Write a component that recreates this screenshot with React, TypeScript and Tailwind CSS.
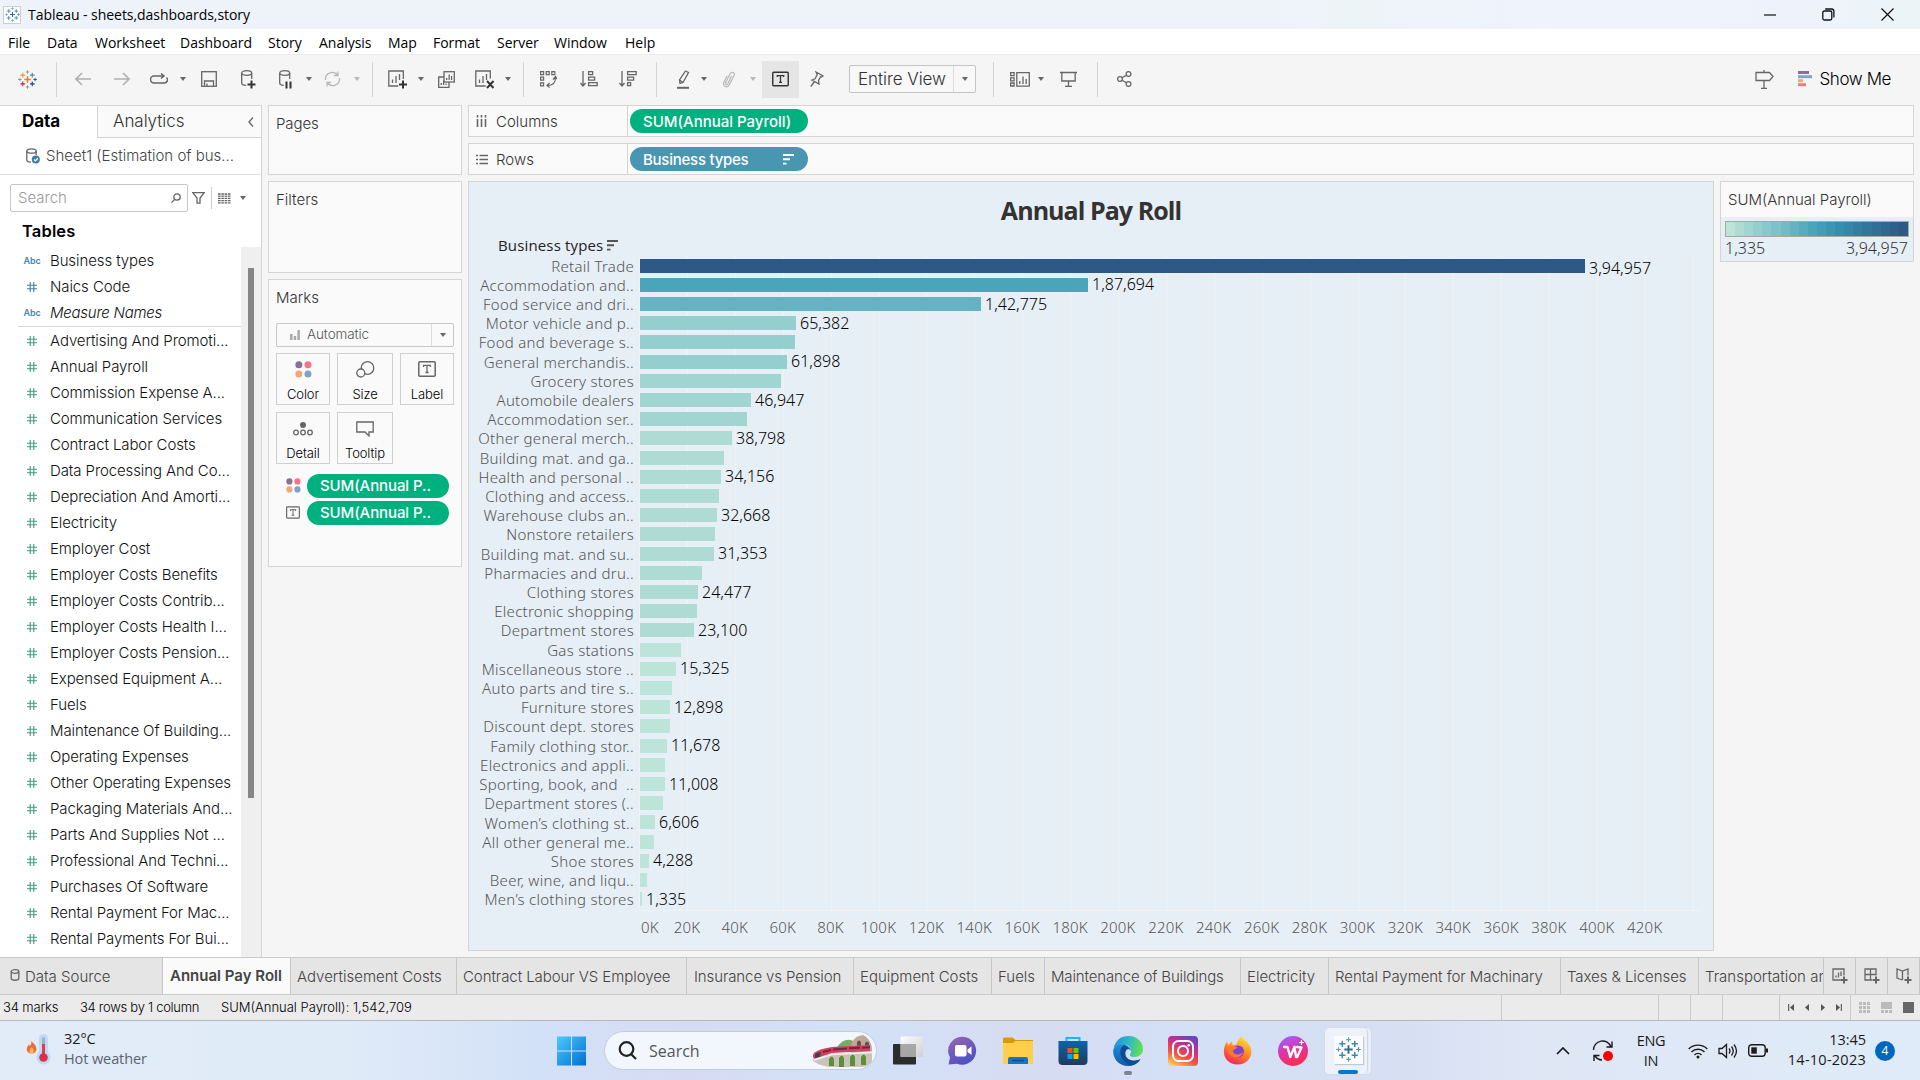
import React from 'react';

type Row = { name: string; w: number; value?: string; color: string };

const C = ['#bce4d8', '#aedcd5', '#a1d5d2', '#95cecf', '#66b2c2', '#4ba5ba', '#2c5985'];
const rows: Row[] = [
  { name: 'Retail Trade', w: 945, value: '3,94,957', color: C[6] },
  { name: 'Accommodation and..', w: 448, value: '1,87,694', color: C[5] },
  { name: 'Food service and dri..', w: 341, value: '1,42,775', color: C[4] },
  { name: 'Motor vehicle and p..', w: 156, value: '65,382', color: C[3] },
  { name: 'Food and beverage s..', w: 155, color: C[3] },
  { name: 'General merchandis..', w: 147, value: '61,898', color: C[3] },
  { name: 'Grocery stores', w: 141, color: C[2] },
  { name: 'Automobile dealers', w: 111, value: '46,947', color: C[2] },
  { name: 'Accommodation ser..', w: 107, color: C[2] },
  { name: 'Other general merch..', w: 92, value: '38,798', color: C[1] },
  { name: 'Building mat. and ga..', w: 84, color: C[1] },
  { name: 'Health and personal ..', w: 81, value: '34,156', color: C[1] },
  { name: 'Clothing and access..', w: 79, color: C[1] },
  { name: 'Warehouse clubs an..', w: 77, value: '32,668', color: C[1] },
  { name: 'Nonstore retailers', w: 75, color: C[1] },
  { name: 'Building mat. and su..', w: 74, value: '31,353', color: C[1] },
  { name: 'Pharmacies and dru..', w: 62, color: C[1] },
  { name: 'Clothing stores', w: 58, value: '24,477', color: C[1] },
  { name: 'Electronic shopping', w: 57, color: C[1] },
  { name: 'Department stores', w: 54, value: '23,100', color: C[1] },
  { name: 'Gas stations', w: 41, color: C[0] },
  { name: 'Miscellaneous store ..', w: 36, value: '15,325', color: C[0] },
  { name: 'Auto parts and tire s..', w: 32, color: C[0] },
  { name: 'Furniture stores', w: 30, value: '12,898', color: C[0] },
  { name: 'Discount dept. stores', w: 30, color: C[0] },
  { name: 'Family clothing stor..', w: 27, value: '11,678', color: C[0] },
  { name: 'Electronics and appli..', w: 25, color: C[0] },
  { name: 'Sporting, book, and  ..', w: 25, value: '11,008', color: C[0] },
  { name: 'Department stores (..', w: 23, color: C[0] },
  { name: 'Women’s clothing st..', w: 15, value: '6,606', color: C[0] },
  { name: 'All other general me..', w: 14, color: C[0] },
  { name: 'Shoe stores', w: 9, value: '4,288', color: C[0] },
  { name: 'Beer, wine, and liqu..', w: 7, color: C[0] },
  { name: 'Men’s clothing stores', w: 2, value: '1,335', color: C[0] },
];

const legend = ['#bce4d8', '#aedcd5', '#a1d5d2', '#95cecf', '#89c8cc', '#7ec1ca', '#72bac6', '#66b2c2', '#59acbe', '#4ba5ba', '#419eb6', '#3b96b2', '#358ead', '#3586a7', '#347ea1', '#32779b', '#316f96', '#2f6790', '#2d608a', '#2c5985'];

const measures = [
  'Advertising And Promoti...', 'Annual Payroll', 'Commission Expense A...', 'Communication Services', 'Contract Labor Costs',
  'Data Processing And Co...', 'Depreciation And Amorti...', 'Electricity', 'Employer Cost', 'Employer Costs Benefits',
  'Employer Costs Contrib...', 'Employer Costs Health I...', 'Employer Costs Pension...', 'Expensed Equipment A...', 'Fuels',
  'Maintenance Of Building...', 'Operating Expenses', 'Other Operating Expenses', 'Packaging Materials And...', 'Parts And Supplies Not ...',
  'Professional And Techni...', 'Purchases Of Software', 'Rental Payment For Mac...', 'Rental Payments For Bui...',
];

const Svg = ({ w, h, children, className = '' }: { w: number; h: number; children: React.ReactNode; className?: string }) => (
  <svg width={w} height={h} viewBox={`0 0 ${w} ${h}`} fill="none" stroke="#666" strokeWidth="1.3" className={`shrink-0 ${className}`}>{children}</svg>
);
const Sep = ({ className = '' }: { className?: string }) => <div className={`h-[35px] w-px shrink-0 bg-[#d4d4d4] ${className}`} />;
const Caret = ({ className = '', c = '#666' }: { className?: string; c?: string }) => (
  <Svg w={6} h={4} className={className}><path d="M0 0h6L3 4z" fill={c} stroke="none" /></Svg>
);
const Hash = ({ c }: { c: string }) => (
  <Svg w={10} h={10}><path d="M3.2 0v10M6.8 0v10M0 3.2h10M0 6.8h10" stroke={c} strokeWidth="1.1" /></Svg>
);

const plus = (x: number, y: number, r: number, c: string, sw = 1.2) => (
  <path key={`${x}-${y}`} d={`M${x - r} ${y}h${2 * r}M${x} ${y - r}v${2 * r}`} stroke={c} strokeWidth={sw} />
);
const TableauMark = ({ size, colors, className = '' }: { size: number; colors: string[]; className?: string }) => (
  <svg width={size} height={size} viewBox="0 0 24 24" fill="none" className={`shrink-0 ${className}`}>
    {plus(12, 12, 4, colors[0], 1.8)}
    {plus(6, 6.5, 3, colors[1], 1.4)}
    {plus(18, 6.5, 3, colors[2], 1.4)}
    {plus(6, 17.5, 3, colors[3], 1.4)}
    {plus(18, 17.5, 3, colors[4], 1.4)}
    {plus(12, 2.5, 2.2, colors[5], 1.1)}
    {plus(12, 21.5, 2.2, colors[5], 1.1)}
    {plus(2.4, 12, 2.2, colors[5], 1.1)}
    {plus(21.6, 12, 2.2, colors[4], 1.1)}
  </svg>
);
const blues = ['#2f6c93', '#3d87b0', '#3d87b0', '#3d87b0', '#3d87b0', '#5b9cbd'];

const Dots = ({ size }: { size: number }) => (
  <svg width={size} height={size} viewBox="0 0 16 16" className="shrink-0">
    <circle cx="3.6" cy="3.6" r="3.3" fill="#876f98" /><circle cx="12.2" cy="3.6" r="3.3" fill="#fa7383" />
    <circle cx="3.6" cy="12.2" r="3.3" fill="#f5a677" /><circle cx="12.2" cy="12.2" r="3.3" fill="#7ea4ca" />
  </svg>
);
const TBox = ({ w, h, c = '#666' }: { w: number; h: number; c?: string }) => (
  <svg width={w} height={h} viewBox="0 0 18 16" fill="none" stroke={c} className="shrink-0">
    <rect x=".8" y=".8" width="16.4" height="14.4" rx="1" strokeWidth="1.5" />
    <path d="M5.6 6V4.4h6.8V6M9 4.4v7M7.4 11.5h3.2" strokeWidth="1.3" />
  </svg>
);

function TitleBar() {
  return (
    <div className="flex h-[29px] items-center bg-[linear-gradient(90deg,#eef3fa_0%,#eef3fa_66%,#edf4f7_70%,#eef3fc_80%,#eef3fb_94%,#ebf4f6_100%)] pl-[3px] font-['Open_Sans'] text-black">
      <div className="flex h-[18px] w-[18px] items-center justify-center border border-[#c9ced3] bg-white"><TableauMark size={15} colors={blues} /></div>
      <span className="ml-[7px] whitespace-nowrap text-[14px] tracking-[-0.05px]">Tableau - sheets,dashboards,story</span>
      <div className="ml-auto mr-[26px] flex items-center gap-[46px]">
        <Svg w={12} h={12}><path d="M0 6h12" stroke="#111" strokeWidth="1.2" /></Svg>
        <Svg w={13} h={13}><rect x=".8" y="3" width="9" height="9" rx="1.5" stroke="#111" /><path d="M3.2 1h6.3a2.4 2.4 0 0 1 2.4 2.4v6" stroke="#111" /></Svg>
        <Svg w={13} h={13}><path d="M.5 .5l12 12M12.500 .5l-12 12" stroke="#111" strokeWidth="1.2" /></Svg>
      </div>
    </div>
  );
}

const menu: [string, string][] = [
  ['File', 'w-[39px]'], ['Data', 'w-[48px]'], ['Worksheet', 'w-[85px]'], ['Dashboard', 'w-[88px]'], ['Story', 'w-[51px]'], ['Analysis', 'w-[69px]'],
  ['Map', 'w-[45px]'], ['Format', 'w-[64px]'], ['Server', 'w-[57px]'], ['Window', 'w-[71px]'], ['Help', 'w-[40px]'],
];

function MenuBar() {
  return (
    <div className="flex h-[25px] items-center bg-white pl-[8px] pt-[2px] font-['Open_Sans'] text-[14px] tracking-[-0.02px] text-black">
      {menu.map(([m, w]) => <div key={m} className={`${w} whitespace-nowrap`}>{m}</div>)}
    </div>
  );
}

function Toolbar() {
  return (
    <div className="flex h-[51px] items-center border-t border-[#ececec] bg-[#f5f5f5] pb-[2px] pl-[18px]">
      <TableauMark size={19} colors={['#e8762d', '#eb912b', '#5b879b', '#c72037', '#1f457e', '#7199a6']} />
      <Sep className="ml-[19px]" />
      <Svg w={16} h={14} className="ml-[18px]"><path d="M16 7H1M7 1L1 7l6 6" stroke="#b0b0b0" strokeWidth="1.6" /></Svg>
      <Svg w={16} h={14} className="ml-[23px]"><path d="M0 7h15M9 1l6 6-6 6" stroke="#b0b0b0" strokeWidth="1.6" /></Svg>
      <Svg w={18} h={12} className="ml-[20px]"><path d="M14 3H4a3.500 3.500 0 0 0 0 7h10a3.200 3.200 0 0 0 2.500-5.500M11 .5L14 3l-3 2.500" strokeWidth="1.5" /></Svg>
      <Caret className="ml-[12px]" />
      <Svg w={16} h={16} className="ml-[15px]"><rect x=".7" y=".7" width="14.600" height="14.600" /><path d="M3.500 15v-5h9v5M6 12.500V15" /></Svg>
      <Svg w={15} h={19} className="ml-[24px]"><ellipse cx="5.700" cy="3" rx="5" ry="2.300" /><path d="M.7 3v10c0 1.500 2 2.300 4.500 2.400M10.700 3v6" /><path d="M10.500 10.500v8M6.500 14.500h8" stroke="#333" strokeWidth="2" /></Svg>
      <Svg w={14} h={19} className="ml-[22px]"><ellipse cx="6.700" cy="3" rx="5" ry="2.300" /><path d="M1.700 3v10c0 1.500 2 2.200 4 2.400M11.700 3v6" /><path d="M8.500 11.500v7M12.500 11.500v7" stroke="#333" strokeWidth="2" /></Svg>
      <Caret className="ml-[14px]" />
      <Svg w={17} h={16} className="ml-[12px]"><path d="M1.500 9A6.800 6.800 0 0 1 13.800 4.300M15.500 7A6.800 6.800 0 0 1 3.200 11.700M14 .5v4h-4M3 15.500v-4h4" stroke="#b8b8b8" /></Svg>
      <Caret className="ml-[13px]" c="#b8b8b8" />
      <Sep className="ml-[12px]" />
      <Svg w={20} h={19} className="ml-[15px]"><path d="M15.300 9V1H.8v15h9.500M4.500 13V9.500M8 13V6M11.500 10V4" /><path d="M15 10.500v8M11 14.500h8" stroke="#333" strokeWidth="2" /></Svg>
      <Caret className="ml-[10px]" />
      <Svg w={17} h={17} className="ml-[14px]"><rect x="6" y=".7" width="10.300" height="10.300" /><path d="M6 6H.7v10.300H11V11M8.700 9V7M11.200 9V3.500M13.600 9V5M3.200 14v-2M5.600 14V9.500M8 14v-1.500" /></Svg>
      <Svg w={20} h={19} className="ml-[20px]"><path d="M15.300 8.500V1H.8v15h10M4.500 13V9.500M8 13V6M11.500 10V4" /><path d="M12 11l6.500 7M18.500 11L12 18" stroke="#333" strokeWidth="1.900" /></Svg>
      <Caret className="ml-[10px]" />
      <Sep className="ml-[12px]" />
      <Svg w={17} h={17} className="ml-[16px]"><path d="M.6.600h3v3h-3zM6.200.600h3v3h-3zM11.800.600h3v3h-3zM.6 6.200h3v3h-3zM.6 11.800h3v3h-3zM15.500 6.500c0 5-2.500 8-8 8M13 8.500l2.500-3 2 3M9.500 12l-2.500 2.500 2.500 2" strokeWidth="1.200" /></Svg>
      <Svg w={18} h={16} className="ml-[23px]"><path d="M3 0v15M.5 12L3 15l2.500-3M8.600.700h4v3h-4zM8.600 6.200h6v3h-6zM8.600 11.700h8.600v3H8.600z" /></Svg>
      <Svg w={18} h={16} className="ml-[21px]"><path d="M3 0v15M.5 12L3 15l2.500-3M8.600.700h8.600v3H8.600zM8.600 6.200h6v3h-6zM8.600 11.700h3v3h-3z" /></Svg>
      <Sep className="ml-[19px]" />
      <Svg w={14} h={19} className="ml-[19px]"><path d="M9.500 1l3 1.500-5.500 10-3 1L3.500 10zM3.500 10L7 12.500" /><path d="M1 17.800h12" strokeWidth="2" /></Svg>
      <Caret className="ml-[11px]" />
      <Svg w={14} h={17} className="ml-[15px]"><path d="M9.500 5L6 12.500c-1 2-3 1-2.200-1L8 3c1.500-3 5.500-1.500 4 1.500L7.500 13.500C5.500 17.500 0 15.500 2 11l3-6" stroke="#bbb" /></Svg>
      <Caret className="ml-[14px]" c="#b8b8b8" />
      <div className="ml-[6px] flex h-[37px] w-[37px] shrink-0 items-center justify-center bg-[#e5e5e5]"><TBox w={17} h={16} c="#333" /></div>
      <Svg w={14} h={16} className="ml-[11px]"><path d="M6 1l7 4-1.500 1-1-.3-2 4L9 13 2 9l3-1.200 2.200-4zM4.500 10.500L.8 15.500" /></Svg>
      <div className="ml-[25px] flex h-[28px] w-[127px] shrink-0 items-center rounded-[2px] border border-[#c4c4c4] bg-[#f8f8f8]">
        <span className="flex-1 whitespace-nowrap pl-[8px] pt-[2px] font-['Inter'] text-[17px] font-light tracking-[-0.05px] text-[#333]">Entire View</span>
        <div className="flex h-full w-[22px] items-center justify-center border-l border-[#ddd]"><Caret /></div>
      </div>
      <Sep className="ml-[17px]" />
      <Svg w={20} h={15} className="ml-[16px]"><path d="M.6.600h3.500v3H.6zM.6 5.800h3.500v3H.6zM.6 11h3.500v3H.6zM6.800.700h12.500v13.500H6.800zM9.800 12V9M13 12V4.500M16.200 12V7" /></Svg>
      <Caret className="ml-[8px]" />
      <Svg w={17} h={16} className="ml-[16px]"><path d="M0 1.500h17M1.800 1.500v8.500h13.400V1.500M8.500 10v5M5 15.300h7" /></Svg>
      <Sep className="ml-[20px]" />
      <Svg w={15} h={16} className="ml-[19px]"><circle cx="3" cy="8" r="2.400" /><circle cx="11.500" cy="3" r="2.400" /><circle cx="11.500" cy="13" r="2.400" /><path d="M5 6.800l4.400-2.600M5 9.200l4.400 2.600" /></Svg>
      <div className="ml-auto mr-[29px] flex items-center">
        <Svg w={19} h={19}><path d="M9 0v2.500M1 2.500h13.500l3.500 4-3.500 4H1zM9 10.500V18M6 18.300h6" /></Svg>
        <Svg w={15} h={16} className="ml-[24px]"><g stroke="none"><path d="M0 0h11v3H0z" fill="#876f98" /><path d="M0 4.200h14v3H0z" fill="#7ea4ca" /><path d="M0 8.200h5v3H0z" fill="#f5a677" /><path d="M0 12.200h8v3H0z" fill="#fa7383" /></g></Svg>
        <span className="ml-[6px] whitespace-nowrap pt-[1px] font-['Inter'] text-[17px] font-light tracking-[-0.4px] text-black">Show Me</span>
      </div>
    </div>
  );
}

function SidePanel() {
  return (
    <div className="flex w-[262px] shrink-0 flex-col border-r border-[#d4d4d4] bg-white font-['Inter'] text-[15px] font-light text-[#111]">
      <div className="flex h-[33px] shrink-0">
        <div className="w-[97px] border-t border-[#d4d4d4] pl-[22px] pt-[3px] text-[17px] font-bold tracking-[-0.1px] text-black">Data</div>
        <div className="flex flex-1 items-center border border-r-0 border-[#d4d4d4] bg-[#fafafa] pl-[15px] pt-[1px] text-[17px] tracking-[-0.05px] text-[#333]">
          Analytics
          <Svg w={6} h={10} className="ml-auto mr-[7px]"><path d="M5 .5L1 5l4 4.500" /></Svg>
        </div>
      </div>
      <div className="flex h-[37px] shrink-0 items-center border-b border-[#e0e0e0] pl-[26px] text-[15px] text-[#444]">
        <Svg w={15} h={17}><ellipse cx="5.500" cy="3" rx="4.700" ry="2.200" /><path d="M.8 3v9c0 1.200 1.500 2 4 2.200M10.200 3v4" /><circle cx="9.800" cy="11.500" r="4" fill="#3d7ea6" stroke="none" /><path d="M8 11.500l1.400 1.400 2.400-2.600" stroke="#fff" /></Svg>
        <span className="ml-[5px] whitespace-nowrap pt-[1px]">Sheet1 (Estimation of bus...</span>
      </div>
      <div className="mt-[9px] flex h-[28px] shrink-0 items-center pl-[10px]">
        <div className="flex h-[28px] w-[178px] items-center justify-between rounded-[2px] border border-[#c6c6c6] pl-[7px] pr-[6px] text-[#999]">
          Search<Svg w={10} h={10}><circle cx="6" cy="4" r="3.200" /><path d="M3.700 6.400L.5 9.600" /></Svg>
        </div>
        <Svg w={13} h={12} className="ml-[4px]"><path d="M.8.700h11.400L8 6v5.200H5V6z" /></Svg>
        <div className="ml-[6px] h-[22px] w-px bg-[#ccc]" />
        <Svg w={13} h={11} className="ml-[6px]"><path d="M0 1h13M0 3.200h13M0 5.400h13M0 7.600h13M0 9.800h13" strokeDasharray="2.600 .7" strokeWidth="1.300" /></Svg>
        <Caret className="ml-[9px]" />
      </div>
      <div className="flex h-[35px] shrink-0 items-center pl-[22px] pt-[3px] text-[16.500px] font-semibold tracking-[0.15px] text-black">Tables</div>
      <div className="flex min-h-0 flex-1">
        <div className="w-[241px] shrink-0 overflow-hidden pt-px tracking-[-0.1px]">
          {[['Business types', 'a'], ['Naics Code', 'h'], ['Measure Names', 'i']].map(([t, k]) => (
            <div key={t} className="flex h-[26px] items-center">
              <div className="flex w-[50px] items-center justify-center pl-[14px]">
                {k === 'h' ? <Hash c="#3d7ea6" /> : <span className="text-[9px] font-semibold text-[#4a86a5]">Abc</span>}
              </div>
              <span className={k === 'i' ? 'italic tracking-[-0.25px]' : ''}>{t}</span>
            </div>
          ))}
          <div className="ml-[18px] h-[2px] border-t border-[#d8d8d8]" />
          {measures.map((m) => (
            <div key={m} className="flex h-[26px] items-center whitespace-nowrap">
              <div className="flex w-[50px] items-center justify-center pl-[14px]"><Hash c="#3fa07a" /></div>
              {m}
            </div>
          ))}
        </div>
        <div className="flex flex-1 justify-center bg-[#efefef] pr-[7px] pt-[21px]"><div className="ml-[7px] h-[530px] w-[6px] bg-[#868686]" /></div>
      </div>
    </div>
  );
}

const Card = ({ className, children }: { className: string; children: React.ReactNode }) => (
  <div className={`border border-[#d4d4d4] bg-[#fafafa] ${className}`}>{children}</div>
);
const MarkBtn = ({ label, className, children }: { label: string; className: string; children: React.ReactNode }) => (
  <div className={`flex h-[52px] flex-col items-center justify-between border border-[#d0d0d0] bg-[#fafafa] pb-[1px] pt-[7px] text-[13px] tracking-[-0.1px] text-black ${className}`}>
    {children}<span className="leading-[18px]">{label}</span>
  </div>
);

function Cards() {
  return (
    <div className="flex w-[194px] shrink-0 flex-col gap-[6px] font-['Inter'] text-[15px] font-light text-[#333]">
      <Card className="h-[70px] pl-[7px] pt-[7px] tracking-[-0.1px]">Pages</Card>
      <Card className="h-[92px] pl-[7px] pt-[7px]">Filters</Card>
      <Card className="h-[288px] pl-[7px] pt-[7px]">
        Marks
        <div className="mt-[13px] flex h-[24px] w-[178px] items-center rounded-[2px] border border-[#c6c6c6] pl-[13px] text-[13.500px] text-[#555]">
          <Svg w={10} h={10}><g stroke="none" fill="#aaa"><path d="M0 4h2.500v6H0zM3.700 6h2.500v4H3.700zM7.400 0h2.500v10H7.400z" /></g></Svg>
          <span className="ml-[7px] flex-1 tracking-[-0.1px]">Automatic</span>
          <div className="flex h-full w-[22px] items-center justify-center border-l border-[#ddd]"><Caret /></div>
        </div>
        <div className="mt-[6px] grid grid-cols-[54px_56px_54px] gap-[7px]">
          <MarkBtn label="Color" className=""><Dots size={17} /></MarkBtn>
          <MarkBtn label="Size" className=""><Svg w={19} h={17}><circle cx="11.500" cy="7" r="6.300" /><circle cx="4.800" cy="12" r="4" fill="#fafafa" /></Svg></MarkBtn>
          <MarkBtn label="Label" className=""><TBox w={18} h={16} /></MarkBtn>
          <MarkBtn label="Detail" className=""><Svg w={20} h={17}><circle cx="10" cy="5" r="3" fill="#666" stroke="none" /><circle cx="3" cy="12.500" r="2.300" /><circle cx="10" cy="12.500" r="2.300" /><circle cx="17" cy="12.500" r="2.300" /></Svg></MarkBtn>
          <MarkBtn label="Tooltip" className=""><Svg w={18} h={17}><path d="M.8 2h16.400v10H13v4l-4-4H.8z" /></Svg></MarkBtn>
        </div>
        {[0, 1].map((i) => (
          <div key={i} className={`flex items-center pl-[10px] ${i ? 'mt-[3px]' : 'mt-[10px]'}`}>
            <div className="flex w-[21px]">{i ? <TBox w={14} h={13} /> : <Dots size={15} />}</div>
            <div className="flex h-[24px] w-[142px] items-center rounded-full bg-[#00b180] pl-[13px] pt-[2px] text-[15px] font-medium tracking-[-0.1px] text-white">SUM(Annual P..</div>
          </div>
        ))}
      </Card>
    </div>
  );
}

function Shelf({ label, children, icon }: { label: string; children: React.ReactNode; icon: React.ReactNode }) {
  return (
    <div className="flex h-[32px] items-center border border-[#d4d4d4] bg-[#fafafa] font-['Inter'] text-[15px] font-light text-[#333]">
      <div className="flex h-full w-[159px] items-center border-r border-[#d4d4d4] pl-[7px]"><div className="w-[20px]">{icon}</div><span className="pt-[2px]">{label}</span></div>
      {children}
    </div>
  );
}

const SortGlyph = ({ c }: { c: string }) => (
  <Svg w={11} h={11}><path d="M0 1h11M0 5.300h7M0 9.600h3.500" stroke={c} strokeWidth="1.900" /></Svg>
);

function Chart() {
  return (
    <div className="flex w-[1246px] shrink-0 flex-col border border-[#d4d4d4] bg-[#e6eff5] font-['Noto_Sans']">
      <div className="flex h-[55px] shrink-0 items-center justify-center pt-[3px] font-['Open_Sans'] text-[25px] font-bold tracking-[-0.95px] text-[#333]">Annual Pay Roll</div>
      <div className="flex h-[19px] shrink-0 items-center gap-[4px] pb-[2px] pl-[29px] font-['Open_Sans'] text-[15px] tracking-[0.15px] text-[#222]">Business types<SortGlyph c="#555" /></div>
      <div className="relative h-[658px] shrink-0">
        <svg width="1064" height="660" viewBox="0 0 1064 660" className="absolute left-[170px] top-0" stroke="#f1f2f3" fill="none">
          {Array.from({ length: 23 }, (_, i) => <path key={i} d={`M${Math.round(i * 47.9) + 0.5} 0V658`} />)}
          <path d="M0 654.500h1062" />
        </svg>
        <div className="relative flex h-[653px] flex-col">
          {rows.map((r, i) => (
            <div key={r.name} className="flex min-h-0 flex-1 items-center leading-[19px]">
              <div className="w-[165px] shrink-0 whitespace-pre pt-[1px] text-right text-[15px] font-light tracking-[0.28px] text-[#555]">{r.name}</div>
              <div className="ml-[6px] h-[14px] shrink-0" style={{ width: r.w, backgroundColor: r.color }} />
              {r.value && <span className={`ml-[4px] text-[16px] font-light text-black ${i === 0 ? 'pt-[5px]' : ''}`}>{r.value}</span>}
            </div>
          ))}
        </div>
      </div>
      <div className="mt-[4px] flex pl-[147px] text-[15px] font-light leading-[19px] tracking-[0.2px] text-[#555]">
        <span className="w-[47px] pl-[25px]">0K</span>
        {Array.from({ length: 21 }, (_, i) => <span key={i} className="w-[47.900px] shrink-0 text-center">{(i + 1) * 20}K</span>)}
      </div>
    </div>
  );
}

function Legend() {
  return (
    <div className="flex h-[81px] w-[194px] shrink-0 flex-col border border-[#d4d4d4] bg-[#e6eff5]">
      <div className="flex h-[35px] items-center whitespace-nowrap bg-[#fafafa] pl-[7px] pt-[2px] font-['Inter'] text-[15px] font-light text-[#333]">SUM(Annual Payroll)</div>
      <div className="mx-[4px] mt-[4px] flex h-[16px] border border-[#a8a89c]">
        {legend.map((c) => <div key={c} className="flex-1" style={{ backgroundColor: c }} />)}
      </div>
      <div className="flex justify-between pl-[4px] pr-[5px] font-['Noto_Sans'] text-[16px] font-light leading-[22px] text-[#333]"><span>1,335</span><span>3,94,957</span></div>
    </div>
  );
}

const tabs: [string, string][] = [
  ['Advertisement Costs', 'w-[166px] pl-[6px]'], ['Contract Labour VS Employee', 'w-[230px] pl-[6px] tracking-[-0.07px]'], ['Insurance vs Pension', 'w-[167px] pl-[7px] tracking-[-0.1px]'], ['Equipment Costs', 'w-[138px] pl-[6px]'],
  ['Fuels', 'w-[53px] pl-[6px]'], ['Maintenance of Buildings', 'w-[196px] pl-[6px] tracking-[-0.15px]'], ['Electricity', 'w-[88px] pl-[6px]'], ['Rental Payment for Machinary', 'w-[232px] pl-[6px] tracking-[-0.05px]'],
  ['Taxes & Licenses', 'w-[138px] pl-[6px] tracking-[-0.07px]'], ['Transportation an', 'w-[125px] pl-[6px]'],
];

function Tabs() {
  const cell = 'flex shrink-0 items-center border-r border-[#c6c6c6]';
  return (
    <div className="flex h-[38px] border-y border-[#cbcbcb] bg-[#e5e5e5] font-['Inter'] text-[15px] font-light text-[#444]">
      <div className={`${cell} w-[163px] pl-[10px] pt-[2px]`}>
        <Svg w={10} h={12} className="mr-[5px] mb-[5px]"><ellipse cx="5" cy="2.500" rx="3.800" ry="1.800" /><path d="M1.200 2.500v7c0 2.300 7.600 2.300 7.600 0v-7" /></Svg>Data Source
      </div>
      <div className={`${cell} w-[128px] whitespace-nowrap bg-[#fafafa] pl-[7px] font-semibold`}>Annual Pay Roll</div>
      {tabs.map(([t, w]) => <div key={t} className={`${cell} ${w} overflow-hidden whitespace-nowrap pt-[2px]`}>{t}</div>)}
      <div className={`${cell} w-[32px] justify-center`}><Svg w={16} h={16}><path d="M12 7.500V1H1v11h7.500M4 9.500V7.500M6.500 9.500V4.500M9 8V3.500" /><path d="M12 8.500v7M8.500 12h7" strokeWidth="2" /></Svg></div>
      <div className={`${cell} w-[32px] justify-center`}><Svg w={16} h={16}><path d="M12 7.500V1H1v11h7M6.500 1v11M1 6.500h11" /><path d="M12 8.500v7M8.500 12h7" strokeWidth="2" /></Svg></div>
      <div className={`${cell} w-[32px] justify-center`}><Svg w={16} h={16}><path d="M6.500 12L1 10V1l5.500 2L12 1v6.500M6.500 3v9" /><path d="M12 8.500v7M8.500 12h7" strokeWidth="2" /></Svg></div>
    </div>
  );
}

function StatusBar() {
  const d = 'h-full border-l border-[#c9c9c9]';
  return (
    <div className="flex h-[26px] items-center border-b border-[#b4b9c1] bg-[#ebebeb] font-['Inter'] text-[13px] font-light text-black">
      <div className="flex w-[1501px] items-center whitespace-nowrap pl-[3px] tracking-[-0.15px]">
        <span className="w-[77px]">34 marks</span><span className="w-[141px] tracking-[-0.28px]">34 rows by 1 column</span><span className="tracking-[0px]">SUM(Annual Payroll): 1,542,709</span>
      </div>
      <div className={`${d} w-[157px]`} /><div className={`${d} w-[32px]`} /><div className={`${d} w-[32px]`} /><div className={`${d} w-[57px]`} />
      <div className={`${d} flex w-[71px] items-center justify-between px-[8px]`}>
        <Svg w={6} h={7}><path d="M.6 0v7" /><path d="M6 0v7L2 3.500z" fill="#555" stroke="none" /></Svg>
        <Svg w={4} h={7}><path d="M4 0v7L0 3.500z" fill="#555" stroke="none" /></Svg>
        <Svg w={4} h={7}><path d="M0 0v7l4-3.500z" fill="#555" stroke="none" /></Svg>
        <Svg w={6} h={7}><path d="M5.400 0v7" /><path d="M0 0v7l4-3.500z" fill="#555" stroke="none" /></Svg>
      </div>
      <div className={`${d} flex flex-1 items-center gap-[11px] pl-[8px]`}>
        <Svg w={11} h={11}><path d="M0 1.500h11M0 5.500h11M0 9.500h11" stroke="#bbb" strokeWidth="3" strokeDasharray="3 1" /></Svg>
        <Svg w={11} h={11}><path d="M0 0h11v7H0z" fill="#bbb" stroke="none" /><path d="M0 9.500h11" stroke="#bbb" strokeWidth="3" strokeDasharray="3 1" /></Svg>
        <div className="h-[11px] w-[11px] bg-[#666]" />
      </div>
    </div>
  );
}

const Icon = ({ children, vb = '0 0 30 30' }: { children: React.ReactNode; vb?: string }) => (
  <svg width="30" height="30" viewBox={vb} fill="none" className="shrink-0">{children}</svg>
);

function Taskbar() {
  return (
    <div className="flex h-[59px] items-center bg-[linear-gradient(90deg,#e1ecf8_0%,#e0ebf8_18%,#d3e1f8_28%,#d6dbf3_36%,#d3e1f7_44%,#d6dcf2_54%,#d3e0f6_62%,#d6dff3_72%,#dfe7f5_80%,#dfebf8_100%)] font-['Open_Sans'] text-[#1b1b1b]">
      <div className="flex w-[556px] items-center pb-[3px] pl-[26px]">
        <svg width="26" height="32" viewBox="0 0 26 32" fill="none">
          <path d="M5 8c4 3 5.500 5.500 5.500 8.500A5 5 0 0 1 .8 17C.5 14 2 13 3 11.500L4 13c1.500-1.500 1.500-3 1-5z" fill="#f06a3a" />
          <path d="M5.500 14c2 2 2.500 3 2 4.500a2 2 0 0 1-4-.5c0-1.500 1.500-2 2-4z" fill="#ffc34d" />
          <rect x="13" y="1" width="9" height="24" rx="4.500" fill="#bcdcf3" /><circle cx="17.500" cy="24.500" r="7" fill="#bcdcf3" />
          <rect x="16" y="4" width="3" height="8" rx="1.500" fill="#9db2c4" /><rect x="16" y="11" width="3" height="12" fill="#e23a4e" /><circle cx="17.500" cy="24.500" r="4.300" fill="#dd2f4b" />
        </svg>
        <div className="ml-[12px] text-[14.500px] leading-[20px] tracking-[-0.1px]"><div>32°C</div><div className="text-[#5c6470]">Hot weather</div></div>
      </div>
      <Icon><defs><linearGradient id="wn" x1="0" y1="0" x2="1" y2="1"><stop stopColor="#4ccaff" /><stop offset="1" stopColor="#006fd0" /></linearGradient></defs><path d="M1 .5h14v14H1zM16 .5h14v14H16zM1 15.500h14v14H1zM16 15.500h14v14H16z" fill="url(#wn)" /></Icon>
      <div className="ml-[18px] flex h-[39px] w-[273px] shrink-0 items-center overflow-hidden rounded-full border border-[#c3cbdd] bg-[#f2f6fd] pl-[13px]">
        <svg width="19" height="19" viewBox="0 0 19 19" fill="none" stroke="#222" strokeWidth="2.200"><circle cx="8.500" cy="8" r="6.800" /><path d="M13 13l5 5" /></svg>
        <span className="ml-[12px] text-[16px] text-[#555]">Search</span>
        <svg width="62" height="34" viewBox="0 0 62 34" className="ml-auto mr-[3px]">
          <path d="M26 13Q36 0 46 10v8H26z" fill="#76ad62" /><path d="M40 12c2-8 6-10 12-11 6 3 9 9 9 15v12H40z" fill="#bda99a" /><path d="M46 14V8q2-3 4 0v6zM54 14V9q2-3 4 0v5z" fill="#66534b" />
          <path d="M1 26l16-6 44-2v10q-4 5-10 5H18Q6 31 1 26z" fill="#c9c3bc" />
          <path d="M18 25q3-5 5 0v7h-5zM28 24q3-5 5 0v9h-5zM39 23q3-5 5 0v9h-5zM50 23q3-5 5 0v8h-5z" fill="#5d8f35" />
          <path d="M3 19q4-4 18-6l38-2v6l-38 2-18 6q-2-3 0-6z" fill="#dc3d5b" /><path d="M4 20q3-2 6-2l-1 5-5 1z" fill="#34455c" /><path d="M12 17l8-2v2l-8 2zM22 14.500l14-1v2L22 16.500zM38 13.300l11-.6v2l-11 .600zM51 12.700l8-.4v2l-8 .4z" fill="#59304c" /><path d="M3 25l18-5.500 40-2v1.800l-40 2L3 27z" fill="#eee" />
        </svg>
      </div>
      <div className="ml-[16px] flex items-center gap-[25px]">
        <Icon><defs><linearGradient id="tv" x1="0" y1="0" x2="1" y2="1"><stop stopColor="#fff" /><stop offset="1" stopColor="#cfcfcf" /></linearGradient></defs><rect y="8" width="23" height="20.500" rx="1" fill="#2c2c2c" /><rect x="7.500" y=".5" width="22.500" height="20.500" rx="1" fill="url(#tv)" fillOpacity=".9" /><rect x="7.500" y="8" width="15.500" height="13" fill="#9b9b9b" fillOpacity=".8" /></Icon>
        <Icon><defs><linearGradient id="ch" x1="0" y1="0" x2=".5" y2="1"><stop stopColor="#9a66b0" /><stop offset="1" stopColor="#4e52c5" /></linearGradient></defs><path d="M15 .7a14 14 0 1 1-6 27L.5 28.500 2 21.500A14 14 0 0 1 15 .7z" fill="url(#ch)" /><rect x="7" y="9" width="11.500" height="11.500" rx="2" fill="#fff" /><path d="M19.500 13.500l4-3v8.500l-4-3z" fill="#fff" /></Icon>
        <Icon><path d="M0 3q0-1.500 1.500-1.500h8L12.500 4H30v7H0z" fill="#d99a09" /><path d="M0 7h10l2.500-2H30v23H0z" fill="#ffcf4c" /><path d="M5 28v-5q0-2 2-2h16q2 0 2 2v5z" fill="#1376c5" /><path d="M9 24.500h12" stroke="#0b4f94" strokeWidth="1.500" /></Icon>
        <Icon><defs><linearGradient id="st" x1="0" y1="0" x2="0" y2="1"><stop stopColor="#0a64ad" /><stop offset="1" stopColor="#213a5e" /></linearGradient></defs><path d="M8.500 6V2h13v4" stroke="#21b4ef" strokeWidth="2" /><path d="M.5 5h29v20q0 4-4 4h-21q-4 0-4-4z" fill="url(#st)" /><path d="M9.500 12h5v5h-5z" fill="#f25022" /><path d="M15.500 12h5v5h-5z" fill="#7fba00" /><path d="M9.500 18h5v5h-5z" fill="#00a4ef" /><path d="M15.500 18h5v5h-5z" fill="#ffb900" /></Icon>
        <div className="relative flex">
          <Icon><defs><linearGradient id="e1" x1="0" y1=".2" x2="1" y2=".4"><stop stopColor="#1f8fd3" /><stop offset=".5" stopColor="#2fb8c5" /><stop offset="1" stopColor="#62de55" /></linearGradient><linearGradient id="e2" x1="0" y1="0" x2="0" y2="1"><stop stopColor="#1890dd" /><stop offset="1" stopColor="#1259a8" /></linearGradient></defs><path d="M.5 13C2 4.500 8 0 15.500 0 24 0 30 6 30 13c0 5-4 8-8.500 8-4 0-5.500-1.500-4-3.500C19.500 14 17 9 11 9 5.500 9 1.500 11 .5 13z" fill="url(#e1)" /><path d="M.2 14C2 9.500 7 8 11 9c4 .8 7 3 7.300 6-3-4-7-1-6 4 1 4.500 6 8 15 4.500C24 28.500 19 30 15 30 6 30-.5 23 .2 14z" fill="url(#e2)" /><path d="M11 9c-5 3-5 11 0 16 2 2 5 3.500 7 4.500 4-.7 7.500-3 9.500-6.500-8 3.500-14 .5-15-4-1-4 1.500-7 4-6-1.500-2.500-3.500-3.600-5.500-4z" fill="#0f4c92" /></Icon>
          <div className="absolute left-[11px] top-[35px] h-[4px] w-[8px] rounded-full bg-[#7d828b]" />
        </div>
        <Icon><defs><linearGradient id="ig" x1=".2" y1="1" x2=".7" y2="0"><stop stopColor="#ffce55" /><stop offset=".35" stopColor="#f4523f" /><stop offset=".65" stopColor="#cc2f86" /><stop offset="1" stopColor="#6a43c3" /></linearGradient></defs><rect width="30" height="30" rx="4" fill="url(#ig)" /><rect x="5" y="5" width="20" height="20" rx="5.500" stroke="#fff" strokeWidth="2" /><circle cx="15" cy="15" r="5" stroke="#fff" strokeWidth="2" /><circle cx="20.800" cy="9.200" r="1.300" fill="#fff" /></Icon>
        <Icon><defs><linearGradient id="ff" x1=".8" y1="0" x2=".3" y2="1"><stop stopColor="#ffe83d" /><stop offset=".5" stopColor="#ff8a22" /><stop offset="1" stopColor="#f52060" /></linearGradient></defs><path d="M18 .5c2 3 6 4 8.500 8.500C32 18 25 28.500 15 28.500S0 21 1 13.500C1.300 10 3 7 4 5.500L5 9l4-3.500.5 3.500 4-.5C14 5 16 3 18 .5z" fill="url(#ff)" /><circle cx="15" cy="15.500" r="6" fill="#7844d0" /><path d="M4 12c4-2.500 8-2 10.500-.5-1.500 2-4 1.500-4.500 3.500 0 4 6 5 10 1-1 7-14 8-16-4z" fill="#ff7a28" /></Icon>
        <Icon><defs><linearGradient id="wp" x1=".3" y1="0" x2=".7" y2="1"><stop stopColor="#a060ff" /><stop offset=".4" stopColor="#db35b0" /><stop offset="1" stopColor="#ff2c45" /></linearGradient></defs><circle cx="15" cy="15" r="15" fill="url(#wp)" /><path d="M6 11h3.500l2.700 10 4.300-10.200L18 21h1.200l4.300-9.500-4.500-.5" stroke="#fff" strokeWidth="2.300" strokeLinejoin="round" strokeLinecap="round" /><path d="M23.500 4v5M21 6.500h5" stroke="#fff" strokeWidth="1.200" /></Icon>
      </div>
      <div className="ml-[16px] flex h-[48px] w-[48px] shrink-0 rounded-[5px] border border-[#d5dbe8] bg-[#e8edf7]">
        <div className="flex h-[46px] w-[43px] flex-col items-center rounded-[5px] border-r border-[#cfd6e4] bg-[#edf1fa] pt-[8px]">
          <div className="ml-[4px] flex h-[29px] w-[29px] items-center justify-center bg-[#fbfbfb] shadow-[1px_1px_1px_#c4c8cf]"><TableauMark size={25} colors={blues} /></div>
          <div className="ml-[4px] mt-[6px] h-[4px] w-[20px] rounded-full bg-[#0078d4]" />
        </div>
      </div>
      <div className="ml-auto mr-[25px] flex items-center">
        <svg width="14" height="8" viewBox="0 0 14 8" fill="none" stroke="#1b1b1b" strokeWidth="1.700"><path d="M1 7l6-6 6 6" /></svg>
        <svg width="22" height="22" viewBox="0 0 22 22" fill="none" stroke="#1b1b1b" strokeWidth="1.400" className="ml-[22px]"><path d="M1.500 10A9 9 0 0 1 19 7M20 1.500V7h-5.500M2 21v-5.500h5.500M3 16a9 9 0 0 0 7 4" /><circle cx="16" cy="16" r="5" fill="#f00" stroke="none" /></svg>
        <div className="ml-[22px] w-[30px] text-center text-[14.500px] leading-[20px] tracking-[-0.3px]"><div>ENG</div><div>IN</div></div>
        <svg width="20" height="16" viewBox="0 0 20 16" fill="none" stroke="#1b1b1b" strokeWidth="1.400" className="ml-[22px]"><path d="M.7 6a13 13 0 0 1 18.600 0M3.500 9a9.200 9.200 0 0 1 13 0M6.500 12a5 5 0 0 1 7 0" /><circle cx="10" cy="14" r="1.500" fill="#1b1b1b" stroke="none" /></svg>
        <svg width="20" height="16" viewBox="0 0 20 16" fill="none" stroke="#1b1b1b" strokeWidth="1.300" className="ml-[10px]"><path d="M1 5.500h3L8.500 1.500v13L4 10.500H1zM11 5.500q2 2.500 0 5M13.500 3.500q3.500 4.500 0 9M16 1.500q5 6.500 0 13" /></svg>
        <svg width="20" height="13" viewBox="0 0 20 13" fill="none" stroke="#1b1b1b" strokeWidth="1.400" className="ml-[10px]"><rect x=".7" y=".7" width="16.500" height="11.600" rx="3" /><path d="M3.300 3.300h5.500v6.400H3.300z" fill="#1b1b1b" stroke="none" /><path d="M19 4.500v4" strokeWidth="2" /></svg>
        <div className="ml-[19px] w-[79px] whitespace-nowrap pb-[2px] text-right text-[14.500px] leading-[20px] tracking-[0.25px]"><div className="tracking-[-0.05px]">13:45</div><div>14-10-2023</div></div>
        <div className="ml-[9px] flex h-[20px] w-[20px] items-center justify-center rounded-full bg-[#0067c0] text-[12px] text-white">4</div>
      </div>
    </div>
  );
}

export default function App() {
  return (
    <div className="flex h-[1080px] w-[1920px] flex-col overflow-hidden bg-[#f5f5f5]">
      <TitleBar />
      <MenuBar />
      <Toolbar />
      <div className="flex h-[852px] shrink-0">
        <SidePanel />
        <div className="ml-[6px] flex gap-[6px]">
          <Cards />
          <div className="flex flex-col gap-[6px]">
            <Shelf label="Columns" icon={<Svg w={11} h={13}><path d="M1.500 0v2.500M5.500 0v2.500M9.500 0v2.500M1.500 4v8M5.500 4v8M9.500 4v8" strokeWidth="1.600" /></Svg>}>
              <div className="ml-[2px] flex h-[24px] w-[178px] items-center whitespace-nowrap rounded-full bg-[#00b180] pl-[13px] pt-[2px] font-medium text-white">SUM(Annual Payroll)</div>
            </Shelf>
            <Shelf label="Rows" icon={<Svg w={12} h={11}><path d="M0 1.500h2M0 5.500h2M0 9.500h2M3.500 1.500H12M3.500 5.500H12M3.500 9.500H12" strokeWidth="1.700" /></Svg>}>
              <div className="ml-[2px] flex h-[24px] w-[178px] items-center justify-between rounded-full bg-[#4996b2] pl-[13px] pr-[14px] font-medium tracking-[-0.25px] text-white"><span className="pt-[2px]">Business types</span><SortGlyph c="#fff" /></div>
            </Shelf>
            <div className="flex h-[770px] gap-[6px]">
              <Chart />
              <Legend />
            </div>
          </div>
        </div>
      </div>
      <Tabs />
      <StatusBar />
      <Taskbar />
    </div>
  );
}
